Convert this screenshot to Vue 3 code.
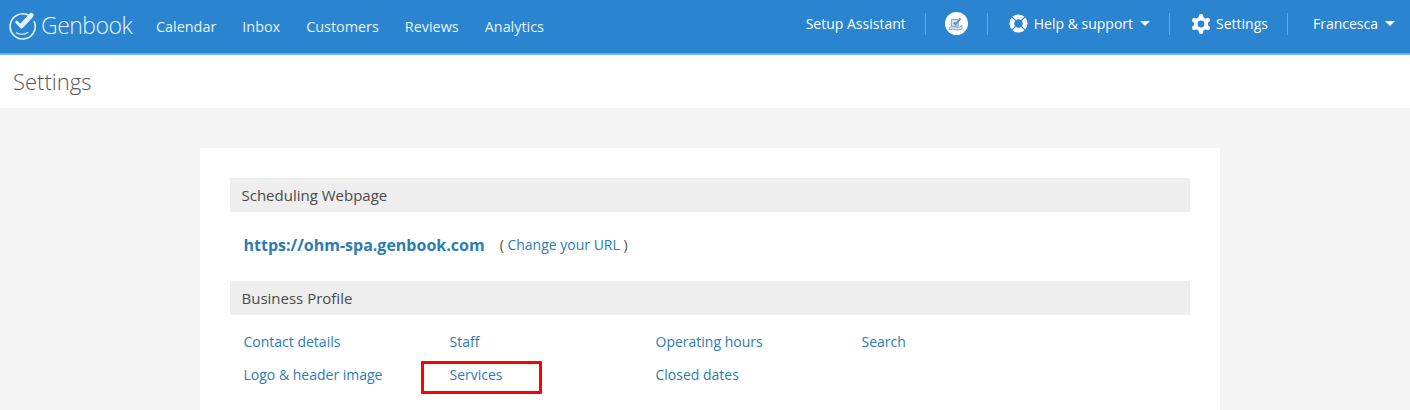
<script setup>
const navLinks = ['Calendar', 'Inbox', 'Customers', 'Reviews', 'Analytics']
const columns = [
  ['Contact details', 'Logo & header image'],
  ['Staff', 'Services'],
  ['Operating hours', 'Closed dates'],
  ['Search'],
]
</script>

<template>
  <div class="page">
    <header class="topbar">
      <div class="brand">
        <svg class="logo" viewBox="0 0 30 30" width="29" height="29" fill="none" stroke="#dff1fb">
          <path d="M20.800 4.200A13 13 0 1 0 27.200 11" stroke-width="1.700" stroke-linecap="round" />
          <path d="M9 11.500l4.500 4.500" stroke-width="3" stroke-linecap="round" />
          <path d="M14 15.500L24 4.500" stroke-width="5" stroke-linecap="round" />
          <path d="M8.500 22.500c3.500 1.800 8.500 1.800 12-.3" stroke-width="1.200" stroke-linecap="round" />
        </svg>
        <span class="wordmark">Genbook</span>
      </div>
      <nav class="nav">
        <a v-for="link in navLinks" :key="link">{{ link }}</a>
      </nav>
      <div class="tools">
        <div class="tool setup">Setup Assistant</div>
        <div class="tool badge-tool">
          <span class="badge">
            <svg viewBox="0 0 24 24" width="18" height="18" fill="none" stroke="#7ea8cf" stroke-width="1.300">
              <path d="M6 6h9v9H6z" fill="#d3e3f2" />
              <path d="M9 10l2.500 2.500L18 4.500" stroke-width="2.600" stroke="#5a93c8" />
              <path d="M3 17c3-2 5-2 8-1s6 .5 9-2v4c-3 2-6 2.500-9 1.500s-5-1-8 .5z" fill="#d3e3f2" />
            </svg>
          </span>
        </div>
        <div class="tool help">
          <svg viewBox="0 0 20 20" width="19" height="19">
            <circle cx="10" cy="10" r="7" fill="none" stroke="#fff" stroke-width="5" />
            <path d="M2.500 2.500l4.500 4.500M17.500 2.500L13 7M2.500 17.500L7 13M17.500 17.500L13 13" stroke="#2a84d0" stroke-width="1.400" />
          </svg>
          <span>Help &amp; support</span>
          <i class="caret"></i>
        </div>
        <div class="tool settings">
          <svg viewBox="0 0 20 20" width="20" height="20">
            <g stroke="#fff" stroke-width="4.600" stroke-linecap="round">
              <path d="M10 2.300v15.400M3.300 6.150l13.400 7.700M3.300 13.850l13.400-7.700" />
            </g>
            <circle cx="10" cy="10" r="7" fill="#fff" />
            <circle cx="10" cy="10" r="3.400" fill="#2a84d0" />
          </svg>
          <span>Settings</span>
        </div>
        <div class="tool user">
          <span>Francesca</span>
          <i class="caret"></i>
        </div>
      </div>
    </header>

    <div class="titlebar">Settings</div>

    <main class="content">
      <section class="card">
        <h2 class="section-head">Scheduling Webpage</h2>
        <div class="url-row">
          <a class="url">https://ohm-spa.genbook.com</a>
          <span class="change">( <a>Change your URL</a> )</span>
        </div>
        <h2 class="section-head">Business Profile</h2>
        <div class="link-grid">
          <div v-for="col in columns" :key="col[0]" class="link-col">
            <a v-for="link in col" :key="link" :class="{ marked: link === 'Services' }">{{ link }}</a>
          </div>
        </div>
      </section>
    </main>
  </div>
</template>

<style>
html, body { margin: 0; background: #f4f4f4; }
</style>

<style scoped>
.page {
  width: 1410px;
  height: 410px;
  overflow: hidden;
  background: #f4f4f4;
  font-family: "Open Sans", sans-serif;
  font-size: 14px;
  color: #4a4a4a;
}
a { color: #2b7cb3; }
.topbar {
  height: 53px;
  display: flex;
  align-items: center;
  background: #2a84d0;
  border-bottom: 2px solid #72b3e1;
  color: #fff;
}
.brand {
  display: flex;
  align-items: center;
  margin-left: 8px;
  margin-top: -2px;
  width: 148px;
  gap: 4px;
}
.logo { flex: none; }
.wordmark {
  font-size: 23px;
  font-weight: 300;
  letter-spacing: -0.5px;
  color: #e6f5fd;
  line-height: 1;
}
.nav {
  display: flex;
  gap: 26px;
  font-size: 14.4px;
}
.nav a { color: #e6f3fb; }
.tools {
  margin-left: auto;
  display: flex;
  align-items: center;
  height: 22px;
  margin-top: -6px;
  font-weight: 500;
}
.tool {
  display: flex;
  align-items: center;
  height: 22px;
  border-left: 1px solid #6aaadf;
  white-space: nowrap;
}
.tool:first-child { border-left: none; }
.setup { padding: 0 19px 0 0; }
.badge-tool { padding: 0 19px; }
.badge {
  width: 23px;
  height: 23px;
  border-radius: 50%;
  background: #fff;
  display: flex;
  align-items: center;
  justify-content: center;
}
.help { gap: 6px; padding: 0 19px 0 21px; }
.help .caret { margin-left: 1px; }
.settings { gap: 5px; padding: 0 19px 0 21px; }
.user { padding: 0 15px 0 25px; gap: 5px; }
.caret {
  display: inline-block;
  width: 0;
  height: 0;
  margin-left: 2px;
  border-left: 5px solid transparent;
  border-right: 5px solid transparent;
  border-top: 5px solid #fff;
}
.titlebar {
  height: 53px;
  background: #fff;
  padding-left: 13px;
  font-size: 22px;
  font-weight: 300;
  line-height: 53px;
  color: #555;
}
.content {
  padding: 40px 0 0 200px;
}
.card {
  width: 1020px;
  box-sizing: border-box;
  min-height: 300px;
  padding: 30px 30px 0;
  background: #fff;
}
.section-head {
  margin: 0;
  height: 34px;
  padding-left: 11.5px;
  background: #eeeeee;
  font-size: 15px;
  font-weight: 400;
  line-height: 35px;
  color: #4a4a4a;
}
.url-row {
  height: 69px;
  box-sizing: border-box;
  padding: 0 0 4px 13.5px;
  display: flex;
  align-items: center;
}
.url {
  font-size: 16px;
  font-weight: 700;
}
.change { margin-left: 15px; }
.link-grid {
  display: flex;
  padding: 17px 0 0 13.5px;
}
.link-col {
  width: 206px;
  display: flex;
  flex-direction: column;
  gap: 14px;
  line-height: 19px;
}
.marked { position: relative; }
.marked::after {
  content: "";
  position: absolute;
  left: -29px;
  top: -4px;
  width: 121px;
  height: 33px;
  border: 3px solid #f00;
  box-sizing: border-box;
  border-radius: 1px;
}
</style>
